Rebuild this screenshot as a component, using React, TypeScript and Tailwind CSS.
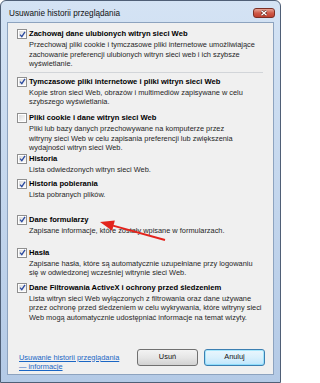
import React from 'react';

interface OptionProps {
  label: string;
  lines: string[];
  checked?: boolean;
  className?: string;
}

const CheckBox: React.FC<{ checked: boolean }> = ({ checked }) => (
  <span className="w-[10px] h-[10px] flex-shrink-0 border border-[#8f8f8f] bg-white p-[1px] flex">
    <span className="flex-1 bg-gradient-to-br from-[#dcdcdc] to-[#fbfbfb] flex items-center justify-center">
      {checked && (
        <svg width="7" height="7" viewBox="0 0 7 7">
          <path d="M1 3.6 L2.8 5.6 L6 0.8" fill="none" stroke="#2a4aa0" strokeWidth="1.3" />
        </svg>
      )}
    </span>
  </span>
);

const Option: React.FC<OptionProps> = ({ label, lines, checked = true, className = '' }) => (
  <div className={className}>
    <div className="flex items-center h-[10px] pl-[9px] gap-[2px]">
      <CheckBox checked={checked} />
      <span className="text-[7.6px] leading-[10px] font-bold text-black whitespace-nowrap">{label}</span>
    </div>
    <div className="mt-[1px] pl-[21px] text-[7.4px] leading-[9.6px] text-[#1f1f1f] whitespace-nowrap">
      {lines.map((l) => (
        <div key={l}>{l}</div>
      ))}
    </div>
  </div>
);

const App: React.FC = () => {
  return (
    <div className="w-[281px] h-[383px] flex flex-col border border-[#4f5f76] rounded-t-[6px] bg-gradient-to-b from-[#d4e3f4] to-[#b4cae6] font-['Liberation_Sans',Arial,sans-serif] overflow-hidden">
      <div className="h-[21px] flex items-start justify-between pl-[8px] pr-[5px]">
        <span className="mt-[8px] text-[8.2px] leading-[10px] text-[#111] whitespace-nowrap">
          Usuwanie historii przeglądania
        </span>
        <div className="mt-[7px] w-[22px] h-[10px] rounded-[3px] border border-[#7c2f24] bg-gradient-to-b from-[#e6a597] via-[#cf5a48] to-[#c0402f] flex items-center justify-center">
          <svg width="8" height="6" viewBox="0 0 8 6">
            <path d="M1.5 0.8 L6.5 5.2 M6.5 0.8 L1.5 5.2" stroke="#5a1a12" strokeWidth="2.6" />
            <path d="M1.5 0.8 L6.5 5.2 M6.5 0.8 L1.5 5.2" stroke="#ffffff" strokeWidth="1.4" />
          </svg>
        </div>
      </div>

      <div className="relative flex-1 mx-[6px] mb-[7px] border border-[#8da3bf] bg-[#f0f0f0] pt-[6px]">
        <Option
          label="Zachowaj dane ulubionych witryn sieci Web"
          lines={[
            'Przechowaj pliki cookie i tymczasowe pliki internetowe umożliwiające',
            'zachowanie preferencji ulubionych witryn sieci web i ich szybsze',
            'wyświetlanie.',
          ]}
        />
        <div className="mt-[3px] ml-[12px] mr-[10px] border-t border-[#d2d5d9]" />
        <Option
          className="mt-[4px]"
          label="Tymczasowe pliki internetowe i pliki witryn sieci Web"
          lines={['Kopie stron sieci Web, obrazów i multimediów zapisywane w celu', 'szybszego wyświetlania.']}
        />
        <Option
          className="mt-[6px]"
          checked={false}
          label="Pliki cookie i dane witryn sieci Web"
          lines={[
            'Pliki lub bazy danych przechowywane na komputerze przez',
            'witryny sieci Web w celu zapisania preferencji lub zwiększenia',
            'wydajności witryn sieci Web.',
          ]}
        />
        <Option className="mt-[1px]" label="Historia" lines={['Lista odwiedzonych witryn sieci Web.']} />
        <Option className="mt-[5px]" label="Historia pobierania" lines={['Lista pobranych plików.']} />
        <Option
          className="mt-[15px]"
          label="Dane formularzy"
          lines={['Zapisane informacje, które zostały wpisane w formularzach.']}
        />
        <Option
          className="mt-[12px]"
          label="Hasła"
          lines={[
            'Zapisane hasła, które są automatycznie uzupełniane przy logowaniu',
            'się w odwiedzonej wcześniej witrynie sieci Web.',
          ]}
        />
        <Option
          className="mt-[5px]"
          label="Dane Filtrowania ActiveX  i ochrony przed śledzeniem"
          lines={[
            'Lista witryn sieci Web wyłączonych z filtrowania oraz dane używane',
            'przez ochronę przed śledzeniem w celu wykrywania, które witryny sieci',
            'Web mogą automatycznie udostępniać informacje na temat wizyty.',
          ]}
        />

        <div className="mt-[26px] flex items-start justify-between pl-[11px] pr-[8px]">
          <div className="pt-[4px] text-[7.4px] leading-[9.6px] text-[#1a66c4] underline whitespace-nowrap">
            <div>Usuwanie historii przeglądania</div>
            <div>— informacje</div>
          </div>
          <div className="flex gap-[6px]">
            <button className="w-[61px] h-[17px] rounded-[3px] border border-[#707070] bg-gradient-to-b from-[#f3f3f3] via-[#e6e6e6] to-[#d2d2d2] text-[7.4px] text-[#111]">
              Usuń
            </button>
            <button className="w-[61px] h-[17px] rounded-[3px] border border-[#3c7fb1] bg-gradient-to-b from-[#eaf6fd] via-[#d9f0fc] to-[#bee6fd] shadow-[inset_0_0_0_1px_#48d2fb66] text-[7.4px] text-[#111]">
              Anuluj
            </button>
          </div>
        </div>

        <svg className="absolute inset-0 pointer-events-none" width="265" height="352">
          <line x1="157" y1="217" x2="105" y2="202.6" stroke="#e3241d" strokeWidth="2" />
          <polygon points="92,199 106.8,197.6 104.2,207.8" fill="#e3241d" />
        </svg>
      </div>
    </div>
  );
};

export default App;
